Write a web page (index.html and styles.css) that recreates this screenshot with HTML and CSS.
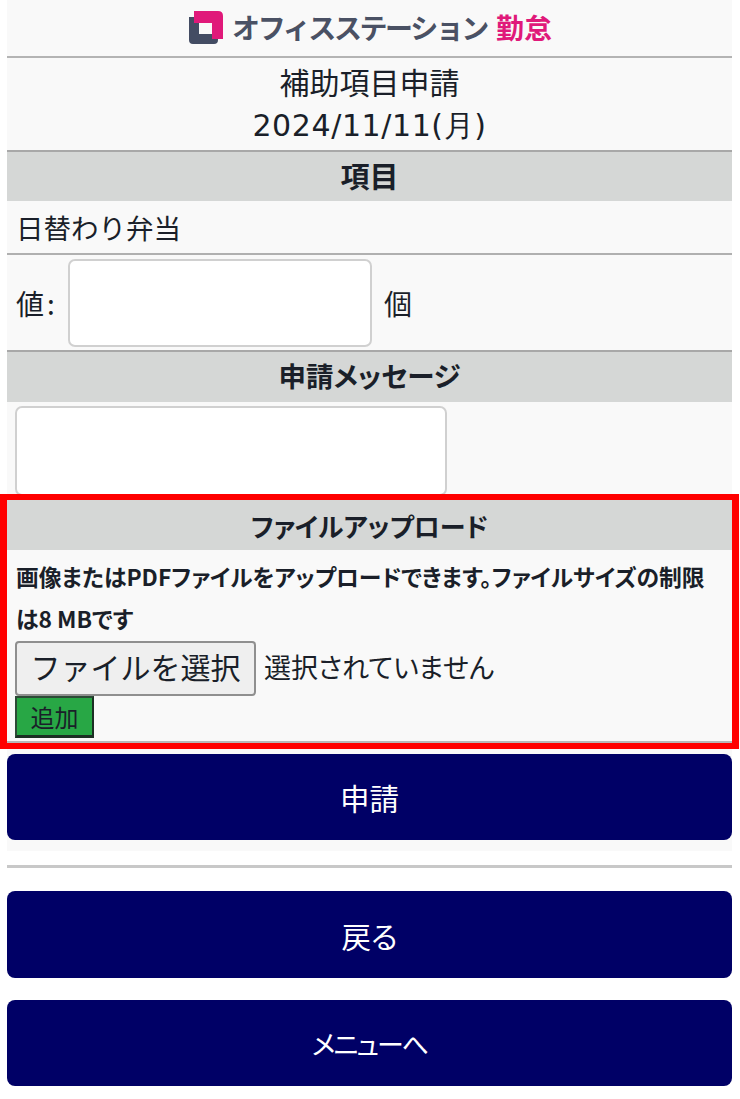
FILE: index.html
```html
<!DOCTYPE html>
<html lang="ja">

<head>
    <meta charset="UTF-8">
    <meta name="viewport" content="width=device-width, initial-scale=1.0">
    <link rel="stylesheet" href="styles.css">
</head>

<body>
    <!-- ロゴ -->
    <div class="logo-bar">
        <svg class="logo-mark" viewBox="0 0 34 33" xmlns="http://www.w3.org/2000/svg">
            <path fill="#434c63" d="M0 6H5V12H10V23H23V28H29V29Q29 33 25 33H4Q0 33 0 29Z" />
            <path fill="#e0197a" d="M5 0H29Q34 0 34 5V28H23V12H5Z" />
        </svg>
        <span class="logo-name">オフィスステーション</span>
        <span class="logo-sub">勤怠</span>
    </div>

    <div class="panel">
        <div class="page-title">
            <div class="page-title-main">補助項目申請</div>
            <div class="page-title-date">2024/11/11(月)</div>
        </div>

        <div class="section-head section-head-item">項目</div>
        <div class="item-name">日替わり弁当</div>

        <div class="value-row">
            <label class="value-label">値:</label>
            <input class="value-input" type="text">
            <span class="value-unit">個</span>
        </div>

        <div class="section-head">申請メッセージ</div>
        <div class="message-row">
            <textarea class="message-input"></textarea>
        </div>

        <!-- ファイルアップロード -->
        <div class="upload">
            <div class="section-head section-head-upload">ファイルアップロード</div>
            <p class="upload-note">画像またはPDFファイルをアップロードできます。ファイルサイズの制限は8 MBです</p>
            <div class="file-row">
                <button class="file-button" type="button">ファイルを選択</button>
                <span class="file-state">選択されていません</span>
            </div>
            <button class="add-button" type="button">追加</button>
        </div>

        <button class="action action-first" type="button">申請</button>
    </div>

    <hr class="divider">

    <button class="action action-back" type="button">戻る</button>
    <button class="action action-menu" type="button">メニューへ</button>

    <!-- 赤枠の注記 -->
    <div class="highlight"></div>
</body>

</html>
```

FILE: styles.css
```css
/* 基础样式 */
body {
    margin: 0;
    padding: 0 8px 0 7px;
    width: 725px;
    height: 1099px;
    overflow: hidden;
    position: relative;
    font-family: "Noto Sans CJK JP", "DejaVu Sans", sans-serif;
    font-feature-settings: "palt";
    background-color: #ffffff;
    color: #1a1f29;
}

/* ロゴ */
.logo-bar {
    height: 54px;
    display: flex;
    align-items: center;
    justify-content: center;
    padding: 0 0 2px 2px;
    background-color: #f9f9f9;
    border-bottom: 2px solid #b4b4b4;
}

.logo-mark {
    width: 34px;
    height: 33px;
    margin-right: 9px;
}

.logo-name {
    font-size: 28px;
    line-height: 34px;
    font-weight: 700;
    color: #4a5164;
    font-feature-settings: normal;
    letter-spacing: -2.4px;
    white-space: nowrap;
}

.logo-sub {
    font-size: 28px;
    line-height: 34px;
    font-weight: 700;
    color: #e0197a;
    margin-left: 9px;
    font-feature-settings: normal;
}

.panel {
    background-color: #f9f9f9;
    padding-bottom: 11px;
}

.page-title {
    height: 92px;
    text-align: center;
    border-bottom: 2px solid #a8a8a8;
}

.page-title-main {
    font-size: 30px;
    line-height: 46px;
    font-feature-settings: normal;
}

.page-title-date {
    font-family: "DejaVu Sans", sans-serif;
    font-size: 30px;
    line-height: 44px;
    letter-spacing: 0.6px;
    font-feature-settings: normal;
}

.section-head {
    height: 50px;
    line-height: 47px;
    text-align: center;
    font-size: 27.5px;
    font-weight: 700;
    background-color: #d5d7d6;
}

.section-head-item {
    height: 49px;
    font-size: 29px;
}

.item-name {
    height: 52px;
    line-height: 52px;
    padding-left: 9px;
    font-size: 27.5px;
    font-feature-settings: normal;
    border-bottom: 2px solid #b0b0b0;
}

.value-row {
    height: 95px;
    display: flex;
    align-items: center;
    padding-left: 9px;
    font-size: 28px;
    border-bottom: 2px solid #a8a8a8;
}

.value-label {
    width: 52px;
    letter-spacing: 3px;
}

.value-input {
    width: 304px;
    height: 88px;
    box-sizing: border-box;
    background-color: #ffffff;
    border: 2px solid #d0d0d0;
    border-radius: 7px;
}

.value-unit {
    margin-left: 12px;
}

.message-row {
    height: 94px;
    padding: 4px 0 0 8px;
}

.message-input {
    display: block;
    width: 432px;
    height: 90px;
    box-sizing: border-box;
    resize: none;
    background-color: #ffffff;
    border: 2px solid #d0d0d0;
    border-radius: 7px;
}

/* ファイルアップロード */
.upload {
    height: 241px;
    border-bottom: 2px solid #b8b8b8;
}

.section-head-upload {
    height: 50px;
    line-height: 51px;
    font-size: 26px;
}

.upload-note {
    margin: 0;
    padding: 6px 20px 0 9px;
    font-size: 22.8px;
    font-weight: 700;
    line-height: 42px;
    height: 85px;
}

.file-row {
    display: flex;
    align-items: center;
    padding-left: 8px;
}

.file-button {
    width: 241px;
    height: 55px;
    padding: 0 0 5px;
    font-family: inherit;
    font-size: 30px;
    font-feature-settings: normal;
    color: #1a1f29;
    background-color: #efefef;
    border: 2px solid #8f8f8f;
    border-radius: 4px;
}

.file-state {
    margin-left: 8px;
    padding-bottom: 5px;
    font-size: 27px;
}

.add-button {
    display: block;
    width: 79px;
    height: 42px;
    margin-left: 8px;
    padding: 0;
    font-family: inherit;
    font-size: 24px;
    color: #1a1f29;
    background-color: #28a745;
    border: 2px solid #2c4a36;
    border-right-color: #1c2f24;
    border-bottom-width: 3px;
    border-bottom-color: #1c2f24;
}

/* ボタン */
.action {
    display: block;
    width: 100%;
    font-family: inherit;
    font-size: 29.5px;
    font-feature-settings: inherit;
    color: #ffffff;
    background-color: #000066;
    border: none;
    border-radius: 8px;
    padding: 0;
}

.action-first {
    height: 86px;
    margin-top: 11px;
}

.divider {
    height: 3px;
    margin: 14px 0 23px;
    border: none;
    background-color: #c8c8c8;
}

.action-back {
    height: 87px;
}

.action-menu {
    height: 86px;
    margin-top: 22px;
    font-size: 27px;
    letter-spacing: -2px;
}

/* 赤枠 */
.highlight {
    position: absolute;
    left: 0;
    top: 494px;
    width: 739px;
    height: 255px;
    box-sizing: border-box;
    border: solid #ff0000;
    border-width: 6px 7px;
    pointer-events: none;
}
```
